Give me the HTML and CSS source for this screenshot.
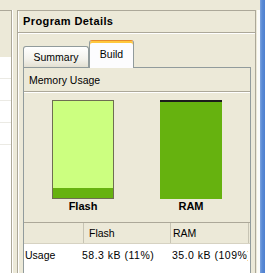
FILE: index.html
```html
<!DOCTYPE html>
<html>
<head>
<meta charset="utf-8">
<link rel="stylesheet" href="styles.css">
</head>
<body>
<div class="app">
  <div class="left">
    <div class="left-head"></div>
    <div class="left-list">
      <div class="row"></div>
      <div class="row"></div>
      <div class="row"></div>
      <div class="row"></div>
    </div>
  </div>
  <div class="panel">
    <div class="panel-head">Program Details</div>
    <div class="panel-body">
      <div class="tabs">
        <div class="tab">Summary</div>
        <div class="tab active">Build</div>
      </div>
      <div class="pane">
        <div class="section-title">Memory Usage</div>
        <div class="chart">
          <div class="bar-col">
            <div class="bar flash"><div class="fill" style="height:10px"></div></div>
            <div class="bar-label">Flash</div>
          </div>
          <div class="bar-col">
            <div class="bar ram"></div>
            <div class="bar-label">RAM</div>
          </div>
        </div>
        <div class="grid-head">
          <div class="hcell"></div>
          <div class="hcell c2">Flash</div>
          <div class="hcell c3">RAM</div>
          <div class="hcell last"></div>
        </div>
        <div class="grid-body">
          <div class="drow">
            <div class="dcell">Usage</div>
            <div class="dcell num">58.3 kB (11%)</div>
            <div class="dcell num">35.0 kB (109%)</div>
          </div>
        </div>
      </div>
    </div>
  </div>
  <div class="edge-gap"></div>
  <div class="edge"></div>
</div>
</body>
</html>
```
FILE: styles.css
```css
html, body {
  margin: 0;
  padding: 0;
}
body {
  width: 265px;
  height: 273px;
  overflow: hidden;
  background: #ece9d8;
  font-family: "Liberation Sans", Arial, sans-serif;
  font-size: 10.5px;
  color: #000;
}
.app {
  display: flex;
  height: 273px;
  padding-top: 10px;
  box-sizing: border-box;
}
.left {
  width: 11px;
  border-top: 1px solid #aca899;
  border-right: 1px solid #aca899;
  box-shadow: 1px 0 0 #fff;
  margin-right: 5px;
  display: flex;
  flex-direction: column;
}
.left-head {
  height: 46px;
  background: #ece9d8;
}
.left-list {
  flex: 1;
  background: #fff;
}
.left-list .row {
  height: 21px;
  border-bottom: 1px solid #ebeae4;
}
.panel {
  width: 239px;
  box-sizing: border-box;
  border: 1px solid #aca899;
  border-bottom: none;
  box-shadow: inset 1px 0 0 #fff;
  display: flex;
  flex-direction: column;
}
.panel-head {
  height: 21px;
  line-height: 21px;
  padding-left: 5px;
  font-weight: bold;
  font-size: 11px;
  letter-spacing: 0.4px;
  border-bottom: 1px solid #aca899;
  box-shadow: 0 1px 0 #fff;
}
.panel-body {
  flex: 1;
  padding: 7px 4px 0 5px;
  display: flex;
  flex-direction: column;
}
.tabs {
  display: flex;
  align-items: flex-end;
  height: 27px;
}
.tab {
  width: 66px;
  height: 21px;
  box-sizing: border-box;
  border: 1px solid #919b9c;
  border-bottom: none;
  border-radius: 3px 3px 0 0;
  background: linear-gradient(#ffffff, #f3f2ec 60%, #e3e0d2);
  text-align: center;
  line-height: 20px;
}
.tab.active {
  width: 45px;
  height: 28px;
  margin-bottom: -1px;
  position: relative;
  border-top: 1px solid #e68b2c;
  box-shadow: inset 0 2px 0 #ffc83c;
  background: #fcfcfe;
  padding-top: 2px;
  line-height: 22px;
}
.pane {
  flex: 1;
  border: 1px solid #919b9c;
  border-bottom: none;
  display: flex;
  flex-direction: column;
  background: #ece9d8;
}
.section-title {
  height: 23px;
  line-height: 24px;
  padding-left: 5px;
  border-bottom: 1px solid #aca899;
  box-shadow: 0 1px 0 #fff;
}
.chart {
  display: grid;
  grid-template-columns: 108px 108px;
  padding: 8px 0 9px 5px;
}
.bar-col {
  display: flex;
  flex-direction: column;
  align-items: center;
}
.bar {
  width: 62px;
  height: 99px;
  box-sizing: border-box;
}
.bar.flash {
  border: 1px solid #6e6e52;
  background: #ccff80;
  display: flex;
  flex-direction: column;
  justify-content: flex-end;
}
.bar.flash .fill {
  background: #66b20f;
}
.bar.ram {
  background: #66b20f;
  border-top: 2px solid #1c1c1c;
}
.bar-label {
  margin-top: 1px;
  height: 13px;
  line-height: 13px;
  font-weight: bold;
  font-size: 11px;
}
.grid-head {
  display: grid;
  grid-template-columns: 60px 87px 78px 1fr;
  height: 20px;
  border-top: 1px solid #aca899;
  border-bottom: 1px solid #d6d2c2;
  background: #ece9d8;
}
.hcell {
  border-right: 1px solid #c7c4b4;
  line-height: 20px;
  white-space: nowrap;
}
.hcell.c2 {
  padding-left: 5px;
}
.hcell.c3 {
  padding-left: 2px;
}
.hcell.last {
  border-right: none;
}
.grid-body {
  flex: 1;
  background: #fff;
}
.drow {
  display: grid;
  grid-template-columns: 56px 90px 78px;
  height: 22px;
  line-height: 22px;
}
.dcell {
  padding-left: 1px;
  white-space: nowrap;
  overflow: hidden;
}
.dcell.num {
  padding-left: 2px;
  letter-spacing: 0.5px;
}
.edge-gap {
  width: 4px;
  box-sizing: border-box;
  border-left: 1px solid #ece9d8;
  background: #fbfbf8;
}
.edge {
  width: 5px;
  margin-top: -10px;
  background: linear-gradient(90deg, #7ea4e0, #5a8bd6 40%, #4f80cf);
}
```
